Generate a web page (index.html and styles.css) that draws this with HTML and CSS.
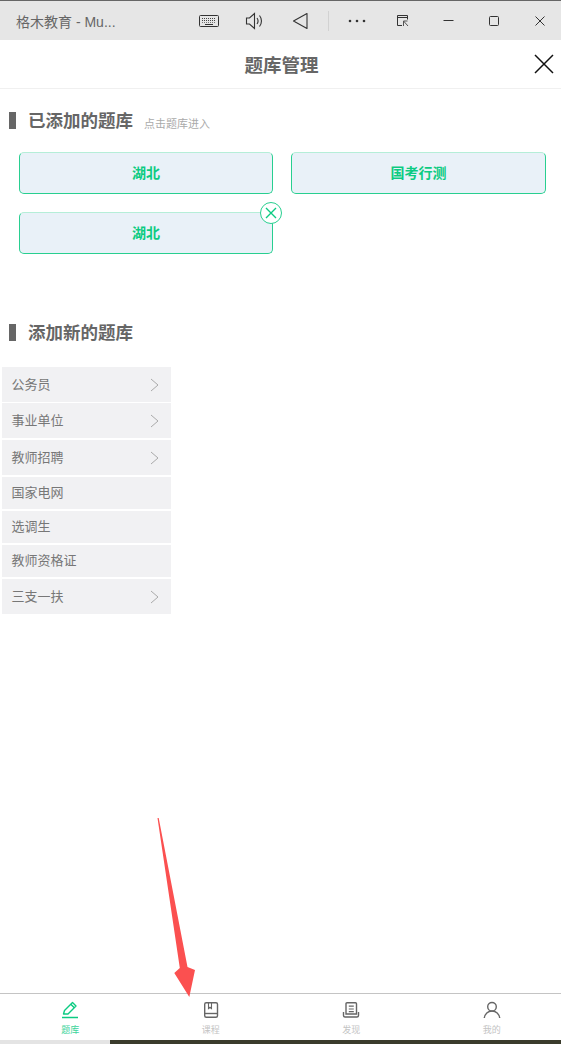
FILE: index.html
```html
<!DOCTYPE html>
<html lang="zh-CN">
<head>
  <meta charset="UTF-8">
  <meta name="viewport" content="width=device-width, initial-scale=1.0">
  <title>题库管理</title>
  <link rel="stylesheet" href="styles.css">
</head>
<body>
  <div class="page">
    <div class="titlebar">
      <span class="window-title">格木教育 - Mu...</span>
      <div class="window-tools">
        <svg class="tool tool-keyboard" width="22" height="16" viewBox="0 0 22 16" fill="none" stroke="#333" stroke-width="1">
          <rect x="1.5" y="2.5" width="19" height="11" rx="1"/>
          <path d="M4 5.5h14M4 7.5h14" stroke-dasharray="1 1" stroke="#444"/>
          <path d="M4 9.5h14" stroke-dasharray="1 1" stroke="#777"/>
          <path d="M7 11.5h8"/>
        </svg>
        <svg class="tool tool-sound" width="20" height="18" viewBox="0 0 20 18" fill="none" stroke="#333" stroke-width="1.1">
          <path d="M1.5 6h3l5-4.5v15l-5-4.500h-3z"/>
          <path d="M12 6c1.300 1.800 1.300 4.200 0 6M14.500 3.500c2.600 3.200 2.600 7.800 0 11"/>
        </svg>
        <svg class="tool tool-back" width="16" height="18" viewBox="0 0 16 18" fill="none" stroke="#333" stroke-width="1.1">
          <path d="M15 1.500v15L1.500 9z" stroke-linejoin="round"/>
        </svg>
        <span class="tool-divider"></span>
        <svg class="tool tool-more" width="18" height="4" viewBox="0 0 18 4" fill="#333">
          <circle cx="2" cy="2" r="1.300"/><circle cx="9" cy="2" r="1.300"/><circle cx="16" cy="2" r="1.300"/>
        </svg>
        <svg class="tool tool-pop" width="13" height="13" viewBox="0 0 13 13" fill="none" stroke="#333" stroke-width="1">
          <path d="M6 11.500H1.500v-10h10v4M1.500 3.500h10"/>
          <path d="M7.500 7v5M7.500 7h4M7.500 7l4.500 5" stroke="#555"/>
        </svg>
        <svg class="tool tool-min" width="11" height="11" viewBox="0 0 11 11" stroke="#333" stroke-width="1"><path d="M0.500 5.500h10"/></svg>
        <svg class="tool tool-max" width="10" height="10" viewBox="0 0 10 10" fill="none" stroke="#333" stroke-width="1"><rect x="0.500" y="0.500" width="9" height="9" rx="1"/></svg>
        <svg class="tool tool-close" width="10" height="10" viewBox="0 0 10 10" stroke="#333" stroke-width="1"><path d="M0.500 0.500l9 9M9.500 0.500l-9 9"/></svg>
      </div>
    </div>

    <header class="page-header">
      <h1>题库管理</h1>
      <svg class="page-close" width="20" height="20" viewBox="0 0 20 20" stroke="#111" stroke-width="1.500"><path d="M1 1l18 18M19 1L1 19"/></svg>
    </header>

    <main class="content">
      <section class="added-section">
        <div class="section-title">
          <h2>已添加的题库</h2>
          <span class="section-hint">点击题库进入</span>
        </div>
        <div class="bank-grid">
          <div class="bank-card">湖北</div>
          <div class="bank-card">国考行测</div>
          <div class="bank-card">湖北
            <span class="bank-remove">
              <svg width="12" height="12" viewBox="0 0 12 12" stroke="#0ccb82" stroke-width="1.400"><path d="M1 1l10 10M11 1L1 11"/></svg>
            </span>
          </div>
        </div>
      </section>

      <section class="new-section">
        <div class="section-title">
          <h2>添加新的题库</h2>
        </div>
        <ul class="category-list">
          <li class="category tall">公务员<svg class="chevron" width="9" height="14" viewBox="0 0 9 14" fill="none" stroke="#aaa"><path d="M1 1l7 6-7 6"/></svg></li>
          <li class="category tall">事业单位<svg class="chevron" width="9" height="14" viewBox="0 0 9 14" fill="none" stroke="#aaa"><path d="M1 1l7 6-7 6"/></svg></li>
          <li class="category tall">教师招聘<svg class="chevron" width="9" height="14" viewBox="0 0 9 14" fill="none" stroke="#aaa"><path d="M1 1l7 6-7 6"/></svg></li>
          <li class="category">国家电网</li>
          <li class="category">选调生</li>
          <li class="category">教师资格证</li>
          <li class="category tall">三支一扶<svg class="chevron" width="9" height="14" viewBox="0 0 9 14" fill="none" stroke="#aaa"><path d="M1 1l7 6-7 6"/></svg></li>
        </ul>
      </section>
    </main>

    <nav class="tabbar">
      <div class="tab active">
        <svg width="18" height="18" viewBox="0 0 18 18" fill="none" stroke="#0ccb82" stroke-width="1.400"><path d="M2.500 13l1-3.500L11.500 1.500l3.500 3.500-8 8z" stroke-linejoin="round"/><path d="M9.800 3.200l3.500 3.500M1 16.500h16"/></svg>
        <span>题库</span>
      </div>
      <div class="tab">
        <svg width="18" height="18" viewBox="0 0 18 18" fill="none" stroke="#666" stroke-width="1.400"><rect x="2.700" y="1.700" width="12.800" height="14.600" rx="1.500"/><path d="M2.700 12.500h12.800"/><path d="M6.500 2v5.500l1.500-1.200 1.500 1.200V2" stroke-width="1.100"/></svg>
        <span>课程</span>
      </div>
      <div class="tab">
        <svg width="18" height="18" viewBox="0 0 18 18" fill="none" stroke="#666" stroke-width="1.400"><path d="M4 13V2.700c0-.6.400-1 1-1h8.500c.6 0 1 .4 1 1V13z"/><path d="M6.800 5.200h5M6.800 8h5M6.800 10.700h5" stroke-width="1.200"/><path d="M1.500 11v3.500c0 1 .6 1.500 1.500 1.500h12c.9 0 1.500-.5 1.500-1.500V11"/></svg>
        <span>发现</span>
      </div>
      <div class="tab">
        <svg width="18" height="18" viewBox="0 0 18 18" fill="none" stroke="#666" stroke-width="1.400"><circle cx="9" cy="5.800" r="4.300"/><path d="M1.300 17c.5-4 3.600-7 7.700-7s7.200 3 7.700 7"/></svg>
        <span>我的</span>
      </div>
    </nav>

    <div class="taskbar">
      <span class="taskbar-light"></span>
      <span class="taskbar-dark"></span>
    </div>

    <svg class="arrow" width="561" height="1044" viewBox="0 0 561 1044">
      <path fill="#fb5050" d="M157.500 818h1.200L187.500 967l7.500 3-5.700 27L174.300 973l5.500-5z"/>
    </svg>
  </div>
</body>
</html>
```

FILE: styles.css
```css
* {
  box-sizing: border-box;
}
html, body {
  margin: 0;
  padding: 0;
}
body {
  background: white;
  font-family: "Liberation Sans", "Noto Sans CJK SC", sans-serif;
}
.page {
  position: relative;
  width: 561px;
  height: 1044px;
  display: flex;
  flex-direction: column;
  overflow: hidden;
}

/* window chrome */
.titlebar {
  height: 40px;
  flex-shrink: 0;
  display: flex;
  align-items: center;
  justify-content: space-between;
  background: #e6e6e6;
  border-top: 1px solid #666;
  padding-left: 16px;
}
.window-title {
  font-size: 14px;
  color: #666;
}
.window-tools {
  display: flex;
  align-items: center;
  padding-right: 16px;
}
.tool {
  display: block;
  flex-shrink: 0;
}
.tool-keyboard { margin-right: 25px; }
.tool-sound { margin-right: 27px; }
.tool-back { margin-right: 20px; }
.tool-divider {
  width: 1px;
  height: 20px;
  background: #d2d2d2;
  margin-right: 19px;
}
.tool-more { margin-right: 30px; }
.tool-pop { margin-right: 34px; }
.tool-min { margin-right: 35px; }
.tool-max { margin-right: 36px; }

/* page header */
.page-header {
  position: relative;
  height: 49px;
  flex-shrink: 0;
  display: flex;
  align-items: center;
  justify-content: center;
  padding-left: 2px;
  border-bottom: 1px solid #f0f0f0;
}
.page-header h1 {
  margin: 0;
  font-size: 18.500px;
  font-weight: bold;
  color: #666;
}
.page-close {
  position: absolute;
  right: 7px;
  top: 14px;
}

/* sections */
.content {
  flex: 1;
}
.section-title {
  display: flex;
  align-items: center;
  height: 18px;
  padding-left: 9px;
}
.section-title::before {
  content: "";
  align-self: flex-start;
  width: 7px;
  height: 17px;
  background: #666;
  margin-right: 12px;
}
.section-title h2 {
  margin: 0 0 4px;
  font-size: 17.500px;
  font-weight: bold;
  color: #666;
}
.section-hint {
  font-size: 11px;
  color: #aaa;
  margin-left: 11px;
  margin-top: 4px;
}
.added-section {
  padding-top: 23px;
}
.bank-grid {
  display: grid;
  grid-template-columns: 254px 255px;
  gap: 18px;
  padding: 22px 0 0 19px;
}
.bank-card {
  position: relative;
  height: 42px;
  display: flex;
  align-items: center;
  justify-content: center;
  padding-bottom: 2px;
  background: #e9f1f8;
  border: 1px solid #28cf90;
  border-top-color: #b5eed8;
  border-radius: 5px;
  font-size: 14px;
  font-weight: bold;
  color: #0ccb82;
}
.bank-remove {
  position: absolute;
  top: -11px;
  right: -10px;
  width: 22px;
  height: 22px;
  display: flex;
  align-items: center;
  justify-content: center;
  background: white;
  border: 1px solid #28cf90;
  border-radius: 50%;
}
.new-section {
  padding-top: 70px;
}
.category-list {
  list-style: none;
  margin: 25px 0 0 2px;
  padding: 0;
  width: 169px;
  display: flex;
  flex-direction: column;
  gap: 2px;
}
.category {
  height: 32px;
  display: flex;
  align-items: center;
  justify-content: space-between;
  padding: 0 12px 3px 9.500px;
  background: #f1f1f3;
  font-size: 13px;
  color: #777;
}
.category.tall {
  height: 35px;
}
.category:first-child {
  margin-bottom: -1px;
}
.chevron {
  display: block;
  margin-top: 3px;
}

/* bottom tabs */
.tabbar {
  height: 47px;
  flex-shrink: 0;
  display: grid;
  grid-template-columns: repeat(4, 140.500px);
  border-top: 1px solid #c4c4c4;
  background: white;
}
.tab {
  display: flex;
  flex-direction: column;
  align-items: center;
  padding-top: 7px;
  font-size: 9px;
  color: #c4c4c4;
}
.tab svg {
  display: block;
}
.tab span {
  margin-top: 4px;
}
.tab.active {
  color: #3bd49b;
}
.taskbar {
  height: 4px;
  flex-shrink: 0;
  display: flex;
}
.taskbar-light {
  width: 110px;
  background: #e4e4e4;
}
.taskbar-dark {
  flex: 1;
  background: #3a3b2c;
}

/* annotation drawn over the screenshot */
.arrow {
  position: absolute;
  left: 0;
  top: 0;
  pointer-events: none;
}
```
